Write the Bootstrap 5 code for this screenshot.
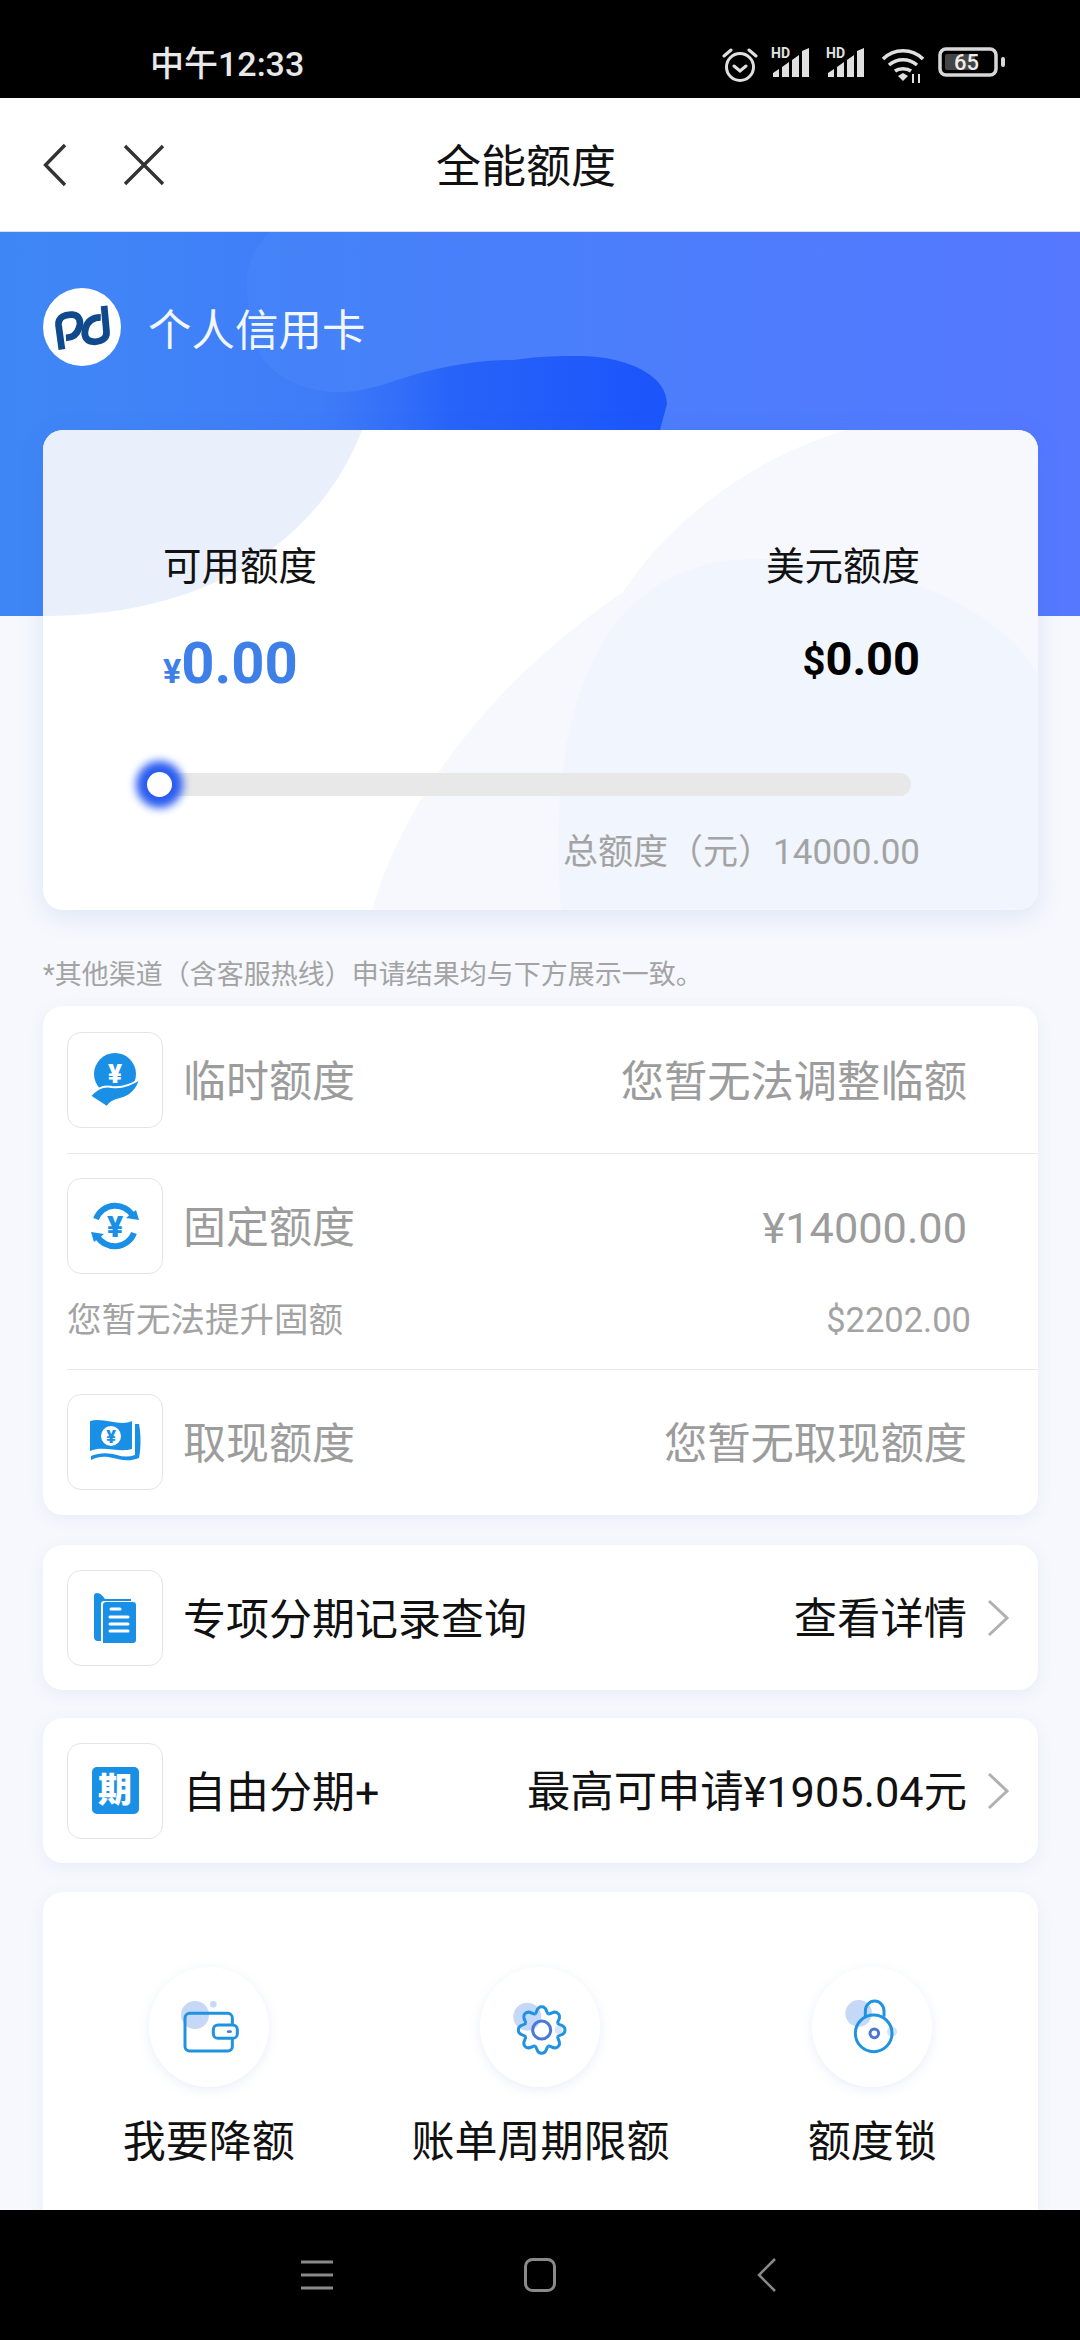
<!DOCTYPE html>
<html lang="zh">
<head>
    <meta charset="UTF-8">
    <meta content="width=device-width, initial-scale=1.0" name="viewport">
    <title>全能额度</title>
    <link href="https://cdn.jsdelivr.net/npm/bootstrap@5.3.0/dist/css/bootstrap.min.css" rel="stylesheet">
    <style>
        html, body { overflow: hidden; }
        body {
            width: 1080px;
            height: 2340px;
            background: #000;
            font-family: Roboto, "Noto Sans CJK SC", sans-serif;
        }
        .app-shell { height: 2340px; }
        .status-strip { height: 98px; background: #000; color: #e8e8e8; padding: 0 74px 0 150px; }
        .status-time { font-size: 34px; font-weight: 500; line-height: 1; margin-top: 47px; }
        .status-icons { gap: 13px; margin-top: 47px; margin-left: auto; }
        .sig-icon { margin-top: -3px; }
        .title-bar { height: 134px; background: #fff; border-bottom: 1px solid #d8dfeb; padding-left: 43px; }
        .title-bar h1 { font-size: 45px; font-weight: 400; color: #111; margin: 5px 0 0 271px; line-height: 1; }
        .close-mark { margin-left: 56px; }
        .page-body { background: #f6f8fd; overflow: hidden; min-height: 0; }
        .hero { height: 384px; padding: 56px 43px 0; background: linear-gradient(90deg, #3e86f6, #5578ff); overflow: hidden; }
        .hero-art { left: 0; top: 0; }
        .hero-name { font-size: 43.5px; color: #f2f6ff; line-height: 1; margin: 22px 0 0 27px; position: relative; }
        .logo-disc { width: 78px; height: 78px; background: #fff; position: relative; }
        .quota-card { height: 480px; margin: -186px 42px 0 43px; background: #fff; border-radius: 20px; box-shadow: 0 6px 26px rgba(70, 110, 200, .14); overflow: hidden; padding: 0 118px 0 120px; }
        .quota-art { left: 0; top: 0; }
        .quota-card > div { position: relative; }
        .quota-head { padding-top: 116px; font-size: 38.5px; line-height: 42px; color: #111; }
        .quota-nums { margin-top: 45px; height: 60px; }
        .rmb-amount { color: #3f80e8; font-size: 58px; font-weight: 700; line-height: 60px; }
        .rmb-amount span { font-size: 34px; }
        .usd-amount { color: #000; font-size: 47px; font-weight: 700; line-height: 50px; margin-top: 1px; }
        .usd-amount span { font-size: 40px; }
        .limit-track { height: 23px; margin: 80px 9px 0 -3px; background: #e8e8e8; border-radius: 12px; }
        .limit-knob { position: absolute; left: -13px; top: -1px; width: 25px; height: 25px; border-radius: 50%; background: #fff; box-shadow: 0 0 8px 11px #2a5cf0; }
        .quota-total { margin-top: 37px; text-align: right; font-size: 35px; line-height: 40px; color: #a3a3a3; }
        .note-line { margin: 48px 0 0 43px; font-size: 27px; line-height: 34px; color: #a3a3a3; }
        .panel { margin: 0 42px 0 43px; background: #fff; border-radius: 20px; box-shadow: 0 4px 16px rgba(90, 120, 190, .09); }
        .panel-list { margin-top: 14px; padding: 26px 0 0 24px; height: 509px; }
        .panel-row { height: 96px; padding-right: 71px; color: #9c9c9c; }
        .tile { width: 96px; height: 96px; flex: none; border: 1px solid #e4e4e4; border-radius: 14px; background: #fff; }
        .period-chip { width: 47px; height: 47px; background: #1a8fe6; border-radius: 5px; color: #fff; font-size: 34px; font-weight: 900; line-height: 47px; text-align: center; }
        .row-name { font-size: 43px; line-height: 1; margin-left: 20px; padding-top: 5px; }
        .row-value { font-size: 43.3px; line-height: 1; margin-left: auto; padding-top: 5px; }
        .row-rule { height: 1px; margin: 25px 0 24px; background: #e9e9e9; }
        .row-rule.after-sub { margin-top: 27px; }
        .row-sub { padding-right: 67px; margin-top: 24px; height: 44px; font-size: 34.5px; line-height: 44px; color: #a3a3a3; }
        .panel-link { height: 145px; margin-top: 30px; padding: 0 28px 0 24px; color: #111; }
        .panel-link.second { margin-top: 28px; }
        .panel-link .row-value { margin-right: 19px; }
        .panel-tools { margin-top: 29px; height: 400px; padding-top: 75px; }
        .tool-disc { width: 120px; height: 120px; background: #fff; box-shadow: 0 3px 12px rgba(90, 120, 200, .13); }
        .tool-label { font-size: 43px; line-height: 1; margin-top: 34px; color: #111; white-space: nowrap; }
        .nav-strip { height: 130px; background: #000; padding-left: 301px; z-index: 2; }
        .nav-home { margin-left: 191px; }
        .nav-back { margin-left: 201px; }
    </style>
</head>
<body>
<div class="app-shell d-flex flex-column">
    <div class="status-strip d-flex align-items-start flex-shrink-0">
        <div class="status-time">中午12:33</div>
        <div class="status-icons d-flex align-items-start">
            <svg width="36" height="36" viewBox="0 0 36 36" fill="none" stroke="#e0e0e0" stroke-width="3"><circle cx="18" cy="20" r="13.5"/><path d="M12 19l6 5 6-5M2 9l7-6M34 9l-7-6" stroke-linecap="round"/></svg>
            <svg class="sig-icon" width="42" height="36" viewBox="0 -3 42 36"><text x="0" y="11" font-family="Roboto" font-size="14" font-weight="700" fill="#e0e0e0">HD</text><path d="M2 30v-4l6-4v8zM11 30V20l7-5v15zM21 30V13l7-5v22zM31 30V4l7-3v29z" fill="#e0e0e0"/></svg>
            <svg class="sig-icon" width="42" height="36" viewBox="0 -3 42 36"><text x="0" y="11" font-family="Roboto" font-size="14" font-weight="700" fill="#e0e0e0">HD</text><path d="M2 30v-4l6-4v8zM11 30V20l7-5v15zM21 30V13l7-5v22zM31 30V4l7-3v29z" fill="#e0e0e0"/></svg>
            <svg width="44" height="36" viewBox="0 0 44 36" fill="none" stroke="#e0e0e0" stroke-width="3.6"><path d="M2 12c11-11 29-11 40 0M8 18c8-7 20-7 28 0M14 24c4-3 12-3 16 0"/><path d="M17 29l5-3 5 3-5 5z" fill="#e0e0e0" stroke="none"/><path d="M32 36v-9M38 36v-9" stroke-width="2"/></svg>
            <svg width="68" height="30" viewBox="0 0 68 30"><rect x="2" y="2" width="56" height="26" rx="6" fill="#000" stroke="#d8d8d8" stroke-width="3.5"/><rect x="7" y="7" width="30" height="16" rx="2" fill="#444"/><rect x="63" y="10" width="4" height="10" rx="2" fill="#d8d8d8"/><text x="16" y="23" font-family="Roboto" font-size="22" font-weight="500" fill="#eee">65</text></svg>
        </div>
    </div>
    <div class="title-bar d-flex align-items-center flex-shrink-0">
        <svg width="24" height="44" viewBox="0 0 24 44" fill="none" stroke="#333" stroke-width="3.4"><path d="M22 2L2.500 22 22 42"/></svg>
        <svg class="close-mark" width="42" height="42" viewBox="0 0 42 42" fill="none" stroke="#333" stroke-width="3.4"><path d="M2 2l38 38M40 2L2 40"/></svg>
        <h1>全能额度</h1>
    </div>
    <div class="page-body flex-grow-1">
        <div class="hero position-relative d-flex align-items-start">
            <svg class="hero-art position-absolute" width="1080" height="384" viewBox="0 0 1080 384">
                <defs><linearGradient id="blobFill" gradientUnits="userSpaceOnUse" x1="100" x2="640" y1="0" y2="0"><stop offset="0" stop-color="#2a68f6" stop-opacity="0"/><stop offset=".4" stop-color="#2a68f6" stop-opacity=".22"/><stop offset=".65" stop-color="#1f5cf8" stop-opacity=".8"/><stop offset="1" stop-color="#1c56fb"/></linearGradient></defs>
                <path d="M270 0C250 20 245 40 247 57 249 85 252 110 263 127 280 150 315 162 347 160 370 158 390 150 413 143 450 133 480 128 513 128 540 124 560 124 580 124 620 124 667 140 667 172L660 198V384H100V0Z" fill="url(#blobFill)"/>
            </svg>
            <div class="logo-disc rounded-circle">
                <svg width="78" height="78" viewBox="24 25 231 231" fill="none" stroke="#0e4a8c" stroke-width="20"><path d="M80 207L70 135C68 112 88 102 112 104 132 106 138 125 130 145 124 165 108 172 92 173"/><path d="M205 78L212 155C214 175 195 186 172 184 150 182 144 165 150 145 156 122 172 112 195 112"/></svg>
            </div>
            <div class="hero-name">个人信用卡</div>
        </div>
        <div class="quota-card position-relative">
            <svg class="quota-art position-absolute" width="995" height="480" viewBox="0 0 995 480">
                <path d="M0 0H319C285 90 190 186 0 186Z" fill="#e9f0fc"/>
                <path d="M804 0C700 30 620 100 580 162 480 230 370 340 329 480H995V0Z" fill="#f6f8fe"/>
                <path d="M518 480C505 330 530 129 714 129 850 129 960 180 995 245V480Z" fill="#f1f5fd"/>
            </svg>
            <div class="quota-head d-flex justify-content-between"><span>可用额度</span><span>美元额度</span></div>
            <div class="quota-nums d-flex justify-content-between align-items-start">
                <div class="rmb-amount"><span>¥</span>0.00</div>
                <div class="usd-amount"><span>$</span>0.00</div>
            </div>
            <div class="limit-track position-relative"><div class="limit-knob"></div></div>
            <div class="quota-total">总额度（元）14000.00</div>
        </div>
        <div class="note-line">*其他渠道（含客服热线）申请结果均与下方展示一致。</div>
        <div class="panel panel-list">
            <div class="panel-row d-flex align-items-center">
                <div class="tile d-flex align-items-center justify-content-center">
                    <svg width="52" height="54" viewBox="0 0 52 54"><circle cx="26" cy="21" r="21" fill="#1a8fe6"/><text x="26" y="30" text-anchor="middle" font-family="Roboto" font-size="26" font-weight="900" fill="#fff">¥</text><path d="M1 43c7-8 14-11 22-9 8 1 16 0 28-8-2 10-10 18-20 20-6 1-10 3-13 8z" fill="#1a8fe6" stroke="#fff" stroke-width="2"/></svg>
                </div>
                <div class="row-name">临时额度</div>
                <div class="row-value">您暂无法调整临额</div>
            </div>
            <div class="row-rule"></div>
            <div class="panel-row d-flex align-items-center">
                <div class="tile d-flex align-items-center justify-content-center">
                    <svg width="52" height="52" viewBox="0 0 52 52" fill="none"><path d="M7 19A20.500 20.500 0 0 1 44 16M45 33A20.500 20.500 0 0 1 8 36" stroke="#1a8fe6" stroke-width="6"/><path d="M50 20l-13-2 10-8zM2 32l13 2-10 8z" fill="#1a8fe6"/><text x="26" y="37" text-anchor="middle" font-family="Roboto" font-size="30" font-weight="900" fill="#1a8fe6">¥</text></svg>
                </div>
                <div class="row-name">固定额度</div>
                <div class="row-value">¥14000.00</div>
            </div>
            <div class="row-sub d-flex justify-content-between"><span>您暂无法提升固额</span><span>$2202.00</span></div>
            <div class="row-rule after-sub"></div>
            <div class="panel-row d-flex align-items-center">
                <div class="tile d-flex align-items-center justify-content-center">
                    <svg width="52" height="46" viewBox="0 0 52 46"><path d="M1 2c14-4 30 6 42 0v28C30 34 14 26 1 32z" fill="#1a8fe6"/><path d="M46 5h4c2 10 2 24 0 34-10 4-18 2-26 0-8-2-14-2-22 2v-4c10-4 18-3 26-1 6 2 12 2 18 0z" fill="#1a8fe6"/><circle cx="22" cy="17" r="10" fill="#fff"/><text x="22" y="24" text-anchor="middle" font-family="Roboto" font-size="18" font-weight="900" fill="#1a8fe6">¥</text></svg>
                </div>
                <div class="row-name">取现额度</div>
                <div class="row-value">您暂无取现额度</div>
            </div>
        </div>
        <div class="panel panel-link d-flex align-items-center">
            <div class="tile d-flex align-items-center justify-content-center">
                <svg width="42" height="50" viewBox="0 0 42 50"><path d="M0 3c0-2 1-3 3-3 3 0 6 3 8 6h26v2H10c-2 0-3 1-3 3v37H4c-3 0-4-2-4-4z" fill="#1a8fe6"/><path d="M9 12c0-2 1-3 3-3h27c2 0 3 1 3 3v35c0 2-1 3-3 3H9z" fill="#1a8fe6"/><path d="M17 16h9M16 24h18M16 31h18M16 38h18" stroke="#fff" stroke-width="3" stroke-linecap="round"/></svg>
            </div>
            <div class="row-name">专项分期记录查询</div>
            <div class="row-value">查看详情</div>
            <svg width="24" height="38" viewBox="0 0 24 38" fill="none" stroke="#b0b0b0" stroke-width="3"><path d="M3 2l18 17L3 36"/></svg>
        </div>
        <div class="panel panel-link second d-flex align-items-center">
            <div class="tile d-flex align-items-center justify-content-center">
                <div class="period-chip">期</div>
            </div>
            <div class="row-name">自由分期+</div>
            <div class="row-value">最高可申请¥1905.04元</div>
            <svg width="24" height="38" viewBox="0 0 24 38" fill="none" stroke="#b0b0b0" stroke-width="3"><path d="M3 2l18 17L3 36"/></svg>
        </div>
        <div class="panel panel-tools row g-0">
            <div class="col-4 d-flex flex-column align-items-center">
                <div class="tool-disc rounded-circle d-flex align-items-center justify-content-center">
                    <svg width="100" height="100" viewBox="-3 6 300 300" fill="none"><circle cx="105" cy="120" r="42" fill="#c6d8f8"/><circle cx="160" cy="88" r="10" fill="#c6d8f8"/><rect x="75" y="115" width="142" height="113" rx="14" stroke="#1f93e0" stroke-width="9"/><rect x="160" y="150" width="72" height="40" rx="14" fill="#fff" stroke="#1f93e0" stroke-width="9"/><ellipse cx="208" cy="170" rx="8" ry="4" fill="#4a77d8"/></svg>
                </div>
                <div class="tool-label">我要降额</div>
            </div>
            <div class="col-4 d-flex flex-column align-items-center">
                <div class="tool-disc rounded-circle d-flex align-items-center justify-content-center">
                    <svg width="100" height="100" viewBox="0 6 300 300" fill="none">
                        <circle cx="112" cy="125" r="42" fill="#c6d8f8"/>
                        <circle cx="205" cy="165" r="11" fill="#d6e3fa"/>
                        <g transform="translate(155 165)" stroke="#1f93e0" stroke-width="9">
                            <path id="gearTooth" d="M-20-48C-13-52-17-70 0-70 17-70 13-52 20-48"/>
                            <use href="#gearTooth" transform="rotate(45)"/>
                            <use href="#gearTooth" transform="rotate(90)"/>
                            <use href="#gearTooth" transform="rotate(135)"/>
                            <use href="#gearTooth" transform="rotate(180)"/>
                            <use href="#gearTooth" transform="rotate(225)"/>
                            <use href="#gearTooth" transform="rotate(270)"/>
                            <use href="#gearTooth" transform="rotate(315)"/>
                        </g>
                        <circle cx="155" cy="165" r="27" stroke="#4a77d8" stroke-width="9"/>
                    </svg>
                </div>
                <div class="tool-label">账单周期限额</div>
            </div>
            <div class="col-4 d-flex flex-column align-items-center">
                <div class="tool-disc rounded-circle d-flex align-items-center justify-content-center">
                    <svg width="100" height="100" viewBox="0 6 300 300" fill="none"><circle cx="110" cy="115" r="40" fill="#c6d8f8"/><circle cx="210" cy="170" r="15" fill="#d6e3fa"/><path d="M130 125V108a28 30 0 0 1 56 0V125" stroke="#1f93e0" stroke-width="9"/><circle cx="155" cy="175" r="55" stroke="#1f93e0" stroke-width="9"/><circle cx="157" cy="175" r="13" stroke="#4a77d8" stroke-width="9"/></svg>
                </div>
                <div class="tool-label">额度锁</div>
            </div>
        </div>
    </div>
    <div class="nav-strip d-flex align-items-center flex-shrink-0 position-relative">
        <svg width="32" height="30" viewBox="0 0 32 30"><path d="M0 2h32M0 15h32M0 28h32" stroke="#8a8a8a" stroke-width="3"/></svg>
        <svg class="nav-home" width="32" height="34" viewBox="0 0 32 34"><rect x="1.500" y="1.500" width="29" height="31" rx="7" fill="none" stroke="#8a8a8a" stroke-width="3"/></svg>
        <svg class="nav-back" width="20" height="34" viewBox="0 0 20 34"><path d="M18 1L2 17l16 16" fill="none" stroke="#8a8a8a" stroke-width="2.500"/></svg>
    </div>
</div>
<script src="https://cdn.jsdelivr.net/npm/bootstrap@5.3.0/dist/js/bootstrap.bundle.min.js"></script>
</body>
</html>
